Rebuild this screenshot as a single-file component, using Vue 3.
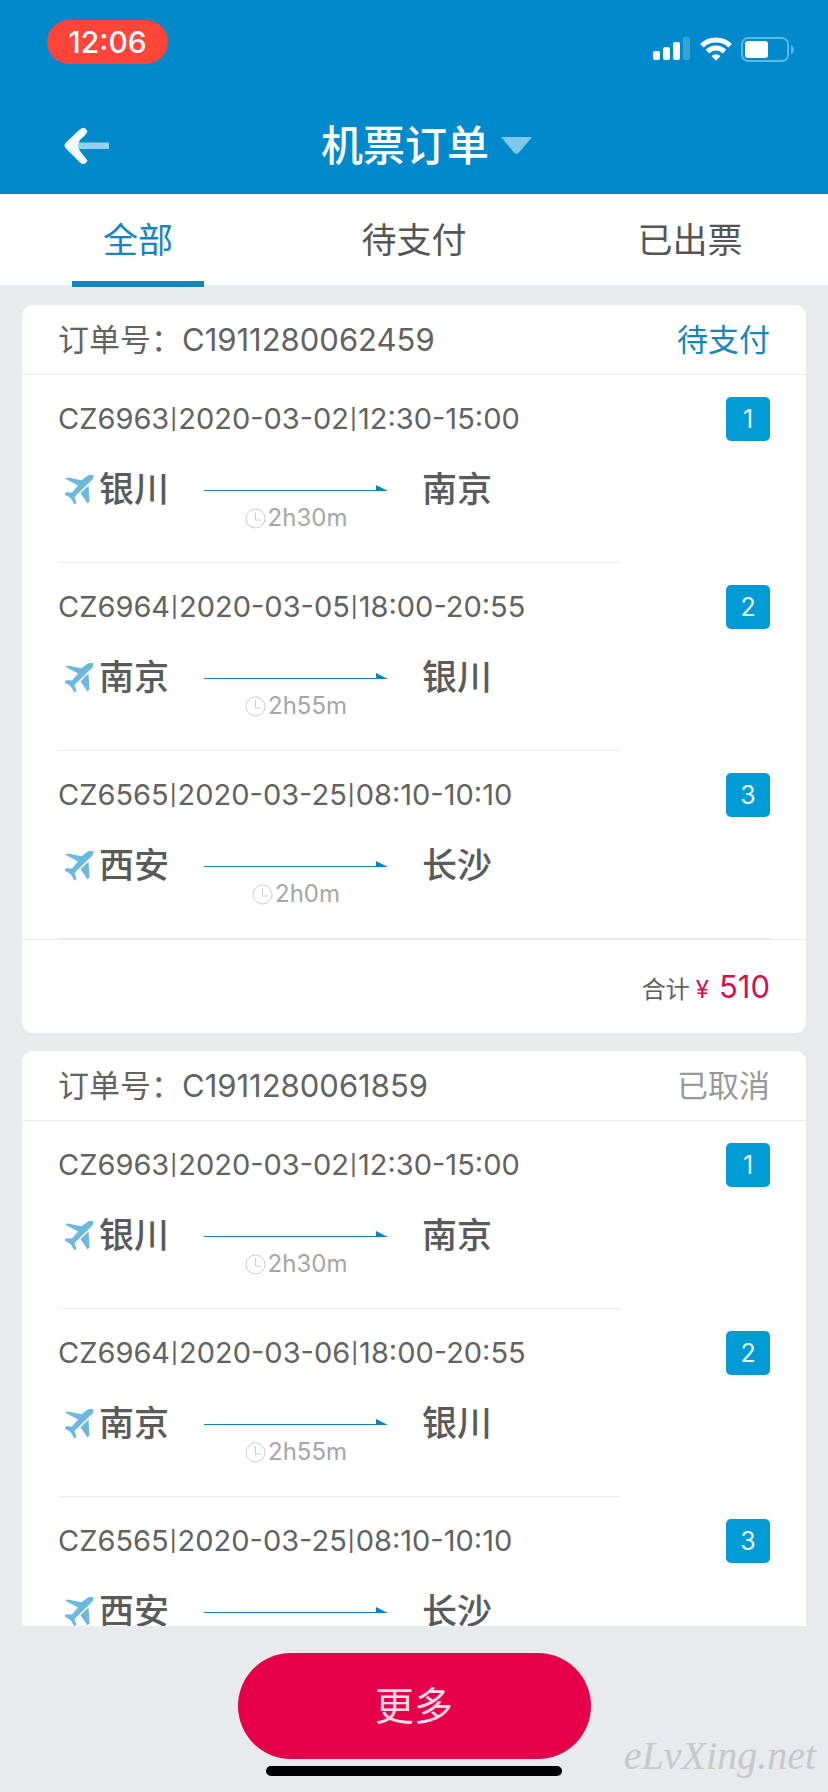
<script setup>
import { ref } from 'vue'

const tabs = ['全部', '待支付', '已出票']
const active = ref(0)

const orders = [
  {
    no: 'C1911280062459',
    status: '待支付',
    pending: true,
    total: 510,
    legs: [
      { flight: 'CZ6963', date: '2020-03-02', hours: '12:30-15:00', from: '银川', to: '南京', time: '2h30m' },
      { flight: 'CZ6964', date: '2020-03-05', hours: '18:00-20:55', from: '南京', to: '银川', time: '2h55m' },
      { flight: 'CZ6565', date: '2020-03-25', hours: '08:10-10:10', from: '西安', to: '长沙', time: '2h0m' },
    ],
  },
  {
    no: 'C1911280061859',
    status: '已取消',
    pending: false,
    legs: [
      { flight: 'CZ6963', date: '2020-03-02', hours: '12:30-15:00', from: '银川', to: '南京', time: '2h30m' },
      { flight: 'CZ6964', date: '2020-03-06', hours: '18:00-20:55', from: '南京', to: '银川', time: '2h55m' },
      { flight: 'CZ6565', date: '2020-03-25', hours: '08:10-10:10', from: '西安', to: '长沙' },
    ],
  },
]
</script>

<template>
  <div class="screen">
    <header class="top">
      <div class="status-bar">
        <span class="clock">12:06</span>
        <div class="indicators">
          <svg class="signal" width="38" height="24" viewBox="0 0 38 24" fill="#fff" aria-hidden="true">
            <rect x="0" y="14" width="7" height="9" rx="2" />
            <rect x="10" y="10" width="7" height="13" rx="2" />
            <rect x="20" y="5" width="7" height="18" rx="2" />
            <rect x="30" y="0" width="7" height="23" rx="2" opacity="0.22" />
          </svg>
          <svg class="wifi" width="32" height="24" viewBox="0 0 32 24" aria-hidden="true">
            <g fill="none" stroke="#fff" stroke-width="5">
              <path d="M1.8 8.7 A20.5 20.5 0 0 1 30.2 8.7" />
              <path d="M7.4 14.6 A12.3 12.3 0 0 1 24.6 14.6" />
            </g>
            <path fill="#fff" d="M11.5 19.1 Q16 15.3 20.5 19.1 L16 23.8Z" />
          </svg>
          <svg class="battery" width="54" height="26" viewBox="0 0 54 26" aria-hidden="true">
            <rect x="1" y="1" width="46" height="23" rx="6" fill="none" stroke="#5bb6e2" stroke-width="2" />
            <rect x="4" y="4" width="23" height="17" rx="3" fill="#fff" />
            <path d="M50 8 Q53 9.500 53 12.500 Q53 15.500 50 17Z" fill="#5bb6e2" />
          </svg>
        </div>
      </div>
      <div class="nav">
        <button class="back" type="button" aria-label="返回">
          <svg width="46" height="38" viewBox="0 0 46 38" aria-hidden="true">
            <path d="M15 15.500 H45 V22 H15Z" fill="#93d0ee" />
            <path d="M18 1 Q21 0 23.500 4 Q23 7 16 13 Q14.500 15 14.500 18.500 Q14.500 22 16 24 L23.500 33.500 Q22 37 19 37 Q17 37 15 34.500 L2 21.500 Q-1 18.500 2 15.500 L14 4Z" fill="#f4fcff" />
          </svg>
        </button>
        <button class="title" type="button">
          <span>机票订单</span>
          <svg width="32" height="18" viewBox="0 0 32 18" aria-hidden="true">
            <path d="M0 0 H31 L18 15.500 Q15.500 18 13 15.500Z" fill="#80c8e9" />
          </svg>
        </button>
      </div>
    </header>

    <nav class="tabs">
      <button
        v-for="(tab, i) in tabs"
        :key="tab"
        type="button"
        class="tab"
        :class="{ active: i === active }"
        @click="active = i"
      >{{ tab }}</button>
    </nav>

    <main class="list">
      <article v-for="order in orders" :key="order.no" class="card">
        <div class="card-head">
          <span>订单号：{{ order.no }}</span>
          <span class="state" :class="{ pending: order.pending }">{{ order.status }}</span>
        </div>
        <ul class="legs">
          <li v-for="(leg, i) in order.legs" :key="i" class="leg">
            <div class="leg-info">
              <p class="flight">{{ leg.flight }}<span class="bar">|</span>{{ leg.date }}<span class="bar">|</span>{{ leg.hours }}</p>
              <div class="route">
                <svg class="plane" width="30" height="30" viewBox="0 0 30 30" fill="#6db9dd" aria-hidden="true">
                  <path d="M1 3.500 L4 2.500 L17.500 5.200 L23.500 0.800 Q27 -1 29 0 Q30 2 28.500 4.500 L10.500 22 L12.500 28 L10.500 29.500 L6.500 23 L0.500 19.500 L2 17.300 L8 17.500 L14 10.500Z" />
                  <path d="M24.500 10.500 L25.500 26.500 L23.500 28.500 L16.500 18.200Z" />
                </svg>
                <span class="city">{{ leg.from }}</span>
                <div class="path">
                  <svg class="arrow" width="184" height="8" viewBox="0 0 184 8" fill="#1482b8" aria-hidden="true">
                    <rect y="5" width="180" height="1" />
                    <path d="M172 0 L184 6 H172Z" />
                  </svg>
                  <span v-if="leg.time" class="duration">
                    <svg width="21" height="21" viewBox="0 0 21 21" fill="none" stroke="#ccc" stroke-width="1" aria-hidden="true">
                      <circle cx="10.500" cy="10.500" r="9.500" />
                      <path d="M10.500 4 V12 H16" />
                    </svg>{{ leg.time }}
                  </span>
                </div>
                <span class="city">{{ leg.to }}</span>
              </div>
            </div>
            <span class="badge">{{ i + 1 }}</span>
          </li>
        </ul>
        <div v-if="order.total" class="total">
          <span>合计</span><span class="yen">¥</span><span class="price">{{ order.total }}</span>
        </div>
      </article>
    </main>

    <footer class="bottom">
      <button class="more" type="button">更多</button>
      <div class="home-bar"></div>
      <span class="watermark">eLvXing.net</span>
    </footer>
  </div>
</template>

<style>
body {
  margin: 0;
}
</style>

<style scoped>
.screen {
  display: flex;
  flex-direction: column;
  height: 100vh;
  background: #e7ebee;
  color: #626262;
  font-family: Inter, "Noto Sans CJK SC", sans-serif;
}

button {
  margin: 0;
  padding: 0;
  border: 0;
  background: none;
  color: inherit;
  font: inherit;
  cursor: pointer;
}

svg {
  display: block;
  flex: none;
}

.top {
  flex: none;
  background: #008acc;
  color: #fff;
}

.status-bar {
  display: flex;
  justify-content: space-between;
  align-items: flex-start;
  height: 80px;
  box-sizing: border-box;
  padding: 20px 33px 0 47px;
}

.clock {
  width: 121px;
  border-radius: 22px;
  background: #ff443a;
  font-size: 30px;
  font-weight: 500;
  line-height: 44px;
  text-align: center;
}

.indicators {
  display: flex;
  gap: 9px;
  padding-top: 17px;
}

.nav {
  display: flex;
  align-items: center;
  height: 114px;
  box-sizing: border-box;
  padding: 18px 84px 0 64px;
}

.title {
  flex: 1;
  display: flex;
  justify-content: center;
  align-items: center;
  gap: 12px;
  font-size: 42px;
  font-weight: 500;
  line-height: 60px;
}

.tabs {
  display: flex;
  flex: none;
  height: 91px;
  background: #fff;
  color: #555;
}

.tab {
  position: relative;
  flex: 1;
  padding-bottom: 4px;
  font-size: 35px;
}

.tab.active {
  color: #1685bd;
}

.tab.active::after {
  content: "";
  position: absolute;
  bottom: -2px;
  left: 26%;
  width: 48%;
  height: 6px;
  background: #1685bd;
}

.list {
  flex: 1;
  min-height: 0;
  overflow: hidden;
  padding: 20px 22px 0;
}

.card {
  margin-bottom: 18px;
  border-radius: 11px;
  background: #fff;
}

.card-head {
  display: flex;
  justify-content: space-between;
  padding: 0 36px;
  border-bottom: 1px solid #e8ebed;
  font-size: 31px;
  line-height: 69px;
}

.state {
  color: #999;
}

.state.pending {
  color: #1685bd;
}

.legs {
  margin: 0;
  padding: 0 36px;
  list-style: none;
}

.leg {
  display: flex;
  justify-content: space-between;
}

.leg-info {
  flex: none;
  width: 562px;
  height: 187px;
  border-bottom: 1px solid #e8ebed;
}

.leg:last-child {
  border-bottom: 1px solid #e8ebed;
}

.leg:last-child .leg-info {
  border-bottom: 0;
}

.flight {
  margin: 0;
  padding-top: 24px;
  font-size: 29px;
  line-height: 40px;
}

.bar {
  margin: 0 1px;
  font-size: 20px;
  font-weight: 500;
  line-height: 20px;
  vertical-align: 3px;
}

.route {
  display: flex;
  align-items: flex-start;
  padding: 24px 0 0 6px;
}

.plane {
  margin-top: 12px;
}

.city {
  padding-left: 5px;
  color: #5a5a5a;
  font-size: 35px;
  font-weight: 500;
  line-height: 52px;
}

.path {
  width: 184px;
  margin: 22px 29px 0 35px;
}

.duration {
  display: flex;
  justify-content: center;
  align-items: center;
  gap: 2px;
  margin-top: 9px;
  color: #a6a6a6;
  font-size: 24px;
  line-height: 32px;
}

.badge {
  width: 44px;
  height: 44px;
  margin-top: 22px;
  border-radius: 5px;
  background: #009ad4;
  color: #e6f7fd;
  font-size: 25px;
  line-height: 45px;
  text-align: center;
}

.total {
  display: flex;
  justify-content: flex-end;
  align-items: baseline;
  padding: 4px 36px 0;
  border-top: 1px solid #e8ebed;
  font-size: 24px;
  line-height: 86px;
}

.yen,
.price {
  color: #d0104f;
}

.yen {
  margin: 0 10px 0 6px;
}

.price {
  font-size: 31px;
}

.bottom {
  position: relative;
  display: flex;
  flex: none;
  flex-direction: column;
  align-items: center;
  padding: 27px 0 16px;
}

.more {
  width: 353px;
  height: 106px;
  padding-bottom: 6px;
  border-radius: 53px;
  background: #e50049;
  color: #ffd9e4;
  font-size: 39px;
}

.home-bar {
  width: 296px;
  height: 10px;
  margin-top: 7px;
  border-radius: 5px;
  background: #000;
}

.watermark {
  position: absolute;
  right: 12px;
  bottom: 12px;
  color: #c6c8ca;
  font-family: "Liberation Serif", serif;
  font-size: 40px;
  font-style: italic;
  line-height: 48px;
}
</style>
